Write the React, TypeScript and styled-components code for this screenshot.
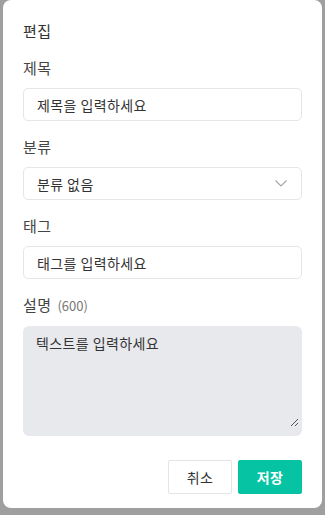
import * as React from 'react';
import styled, {createGlobalStyle} from 'styled-components';

const GlobalStyle = createGlobalStyle`
  html, body {
    margin: 0;
    padding: 0;
    background: #9f9f9f;
    font-family: "Noto Sans CJK KR", "Noto Sans", sans-serif;
  }
  * { box-sizing: border-box; }
`;

const Backdrop = styled.div`
  width: 325px;
  height: 515px;
  background: #9f9f9f;
  padding: 0 3px 0 3px;
  overflow: hidden;
`;

const Modal = styled.div`
  width: 319px;
  height: 508px;
  background: #fff;
  border-radius: 8px;
  padding: 19px 20px 0 20px;
  display: flex;
  flex-direction: column;
  color: #333;
  letter-spacing: 0.4px;
`;

const Title = styled.div`
  font-size: 15px;
  line-height: 24px;
  margin-bottom: 14px;
`;

const Label = styled.div`
  font-size: 15px;
  line-height: 22px;
  color: #444;
  margin-bottom: 9px;
  display: flex;
  align-items: baseline;
  gap: 6px;
`;

const Count = styled.span`
  font-size: 13px;
  color: #777;
  letter-spacing: 0;
`;

const Field = styled.div`
  height: 33px;
  border: 1px solid #e6e6e6;
  border-radius: 5px;
  padding: 0 13px;
  display: flex;
  align-items: center;
  justify-content: space-between;
  font-size: 14px;
  color: #333;
  margin-bottom: 15px;
`;

const TextArea = styled.div`
  height: 110px;
  border-radius: 6px;
  background: #e8e9ed;
  padding: 7px 13px;
  font-size: 14px;
  color: #333;
  position: relative;
`;

const Grip = styled.svg`
  position: absolute;
  right: 3px;
  bottom: 9px;
`;

const Footer = styled.div`
  display: flex;
  justify-content: flex-end;
  gap: 6px;
  margin-top: 24px;
`;

const Button = styled.button<{ $primary?: boolean }>`
  width: 64px;
  height: 34px;
  border-radius: 2px;
  font-family: inherit;
  font-size: 14px;
  letter-spacing: 0.4px;
  font-weight: ${p => p.$primary ? 700 : 400};
  color: ${p => p.$primary ? '#fff' : '#333'};
  background: ${p => p.$primary ? '#06c4a3' : '#fff'};
  border: 1px solid ${p => p.$primary ? '#06c4a3' : '#e4e4e4'};
`;

const App: React.FC = () => {
    return (
        <Backdrop>
            <GlobalStyle/>
            <Modal>
                <Title>편집</Title>
                <Label>제목</Label>
                <Field>제목을 입력하세요</Field>
                <Label>분류</Label>
                <Field>
                    분류 없음
                    <svg width="12" height="7" viewBox="0 0 12 7" style={{marginRight: 1}}>
                        <path d="M0.5 0.5l5.5 5.5 5.5-5.5" fill="none" stroke="#a5a5a5" strokeWidth="1.1"/>
                    </svg>
                </Field>
                <Label>태그</Label>
                <Field>태그를 입력하세요</Field>
                <Label>설명 <Count>(600)</Count></Label>
                <TextArea>
                    텍스트를 입력하세요
                    <Grip width="9" height="9" viewBox="0 0 9 9">
                        <path d="M8 1L1 8M8 5L5 8" stroke="#555" strokeWidth="1"/>
                    </Grip>
                </TextArea>
                <Footer>
                    <Button>취소</Button>
                    <Button $primary>저장</Button>
                </Footer>
            </Modal>
        </Backdrop>
    );
};

export default App;
